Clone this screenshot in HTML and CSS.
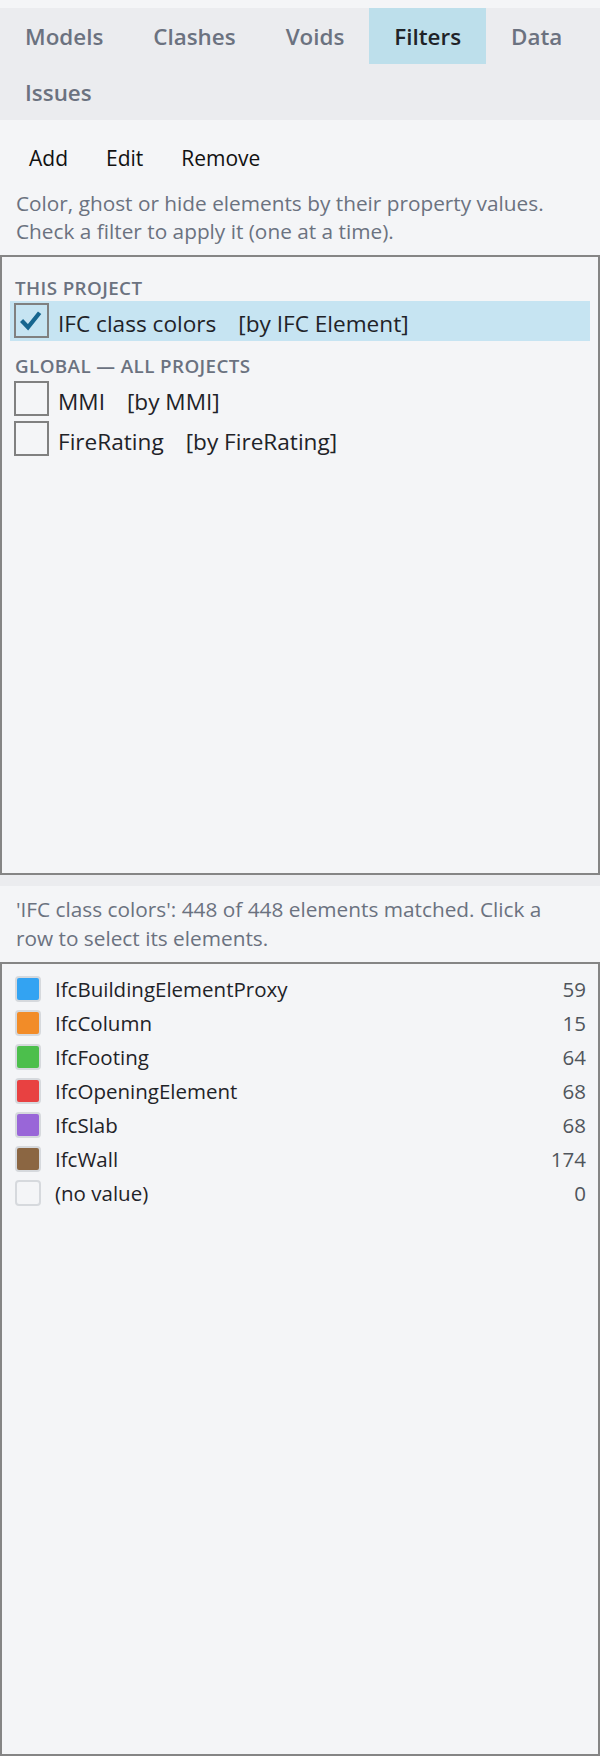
FILE: index.html
```html
<!DOCTYPE html>
<html lang="en">
<head>
<meta charset="utf-8">
<title>Filters</title>
<link rel="stylesheet" href="styles.css">
</head>
<body>
<div class="app">
  <nav class="tabs">
    <div class="tab">Models</div>
    <div class="tab">Clashes</div>
    <div class="tab">Voids</div>
    <div class="tab active">Filters</div>
    <div class="tab">Data</div>
    <div class="tab">Issues</div>
  </nav>

  <div class="toolbar">
    <button class="tool">Add</button>
    <button class="tool">Edit</button>
    <button class="tool">Remove</button>
  </div>

  <p class="hint">Color, ghost or hide elements by their property values. Check a filter to apply it (one at a time).</p>

  <div class="filter-list">
    <div class="group-head">THIS PROJECT</div>
    <div class="filter-row selected">
      <span class="check checked">
        <svg viewBox="0 0 24 24"><path d="M4.3 12 L9.3 17.2 L18.3 6" /></svg>
      </span>
      <span class="name">IFC class colors</span>
      <span class="by">[by IFC Element]</span>
    </div>
    <div class="group-head spaced">GLOBAL — ALL PROJECTS</div>
    <div class="filter-row">
      <span class="check"></span>
      <span class="name">MMI</span>
      <span class="by">[by MMI]</span>
    </div>
    <div class="filter-row">
      <span class="check"></span>
      <span class="name">FireRating</span>
      <span class="by">[by FireRating]</span>
    </div>
  </div>

  <div class="divider"></div>

  <p class="summary">'IFC class colors': 448 of 448 elements matched. Click a row to select its elements.</p>

  <div class="legend">
    <div class="legend-row"><span class="swatch" style="background:#33a3f2"></span><span class="label">IfcBuildingElementProxy</span><span class="count">59</span></div>
    <div class="legend-row"><span class="swatch" style="background:#f28c28"></span><span class="label">IfcColumn</span><span class="count">15</span></div>
    <div class="legend-row"><span class="swatch" style="background:#4cbf4c"></span><span class="label">IfcFooting</span><span class="count">64</span></div>
    <div class="legend-row"><span class="swatch" style="background:#e84141"></span><span class="label">IfcOpeningElement</span><span class="count">68</span></div>
    <div class="legend-row"><span class="swatch" style="background:#9966d8"></span><span class="label">IfcSlab</span><span class="count">68</span></div>
    <div class="legend-row"><span class="swatch" style="background:#8b6642"></span><span class="label">IfcWall</span><span class="count">174</span></div>
    <div class="legend-row"><span class="swatch empty"></span><span class="label">(no value)</span><span class="count">0</span></div>
  </div>
</div>
</body>
</html>
```

FILE: styles.css
```css
* {
  box-sizing: border-box;
}

html, body {
  margin: 0;
  padding: 0;
  background: #f4f5f7;
}

body {
  font-family: "Open Sans", "Noto Sans", "Liberation Sans", sans-serif;
  color: #1f2328;
}

.app {
  height: 1756px;
  display: flex;
  flex-direction: column;
  padding-top: 8px;
}

/* tab strip */
.tabs {
  display: flex;
  flex-wrap: wrap;
  background: #ebecef;
}

.tab {
  height: 56px;
  line-height: 54px;
  padding: 2px 25px 0;
  font-size: 22.4px;
  font-weight: 600;
  color: #6b7280;
}

.tab.active {
  background: #bddfeb;
  color: #1f2328;
}

/* action buttons */
.toolbar {
  display: flex;
  padding: 18px 10px 0;
}

.tool {
  font-family: inherit;
  font-size: 21px;
  line-height: 40px;
  height: 40px;
  padding: 0 19px;
  border: 0;
  background: transparent;
  color: #111;
}

.hint,
.summary {
  margin: 11px 0 0;
  padding: 0 30px 0 16px;
  font-size: 20.8px;
  line-height: 28.4px;
  color: #6b7280;
}

/* filter list */
.filter-list {
  margin-top: 9px;
  height: 620px;
  border: 2px solid #858585;
  padding: 16px 8px;
}

.group-head {
  font-size: 18.8px;
  font-weight: 600;
  letter-spacing: 0.4px;
  line-height: 22px;
  padding-top: 4px;
  color: #6b7280;
  padding-left: 5px;
  margin-bottom: 2px;
}

.group-head.spaced {
  margin-top: 10px;
}

.filter-row {
  display: flex;
  align-items: center;
  height: 40px;
  padding-left: 4px;
  font-size: 22.6px;
  color: #1f2328;
}

.filter-row.selected {
  background: #c6e4f2;
}

.name,
.by {
  padding-top: 6px;
}

.check {
  width: 35px;
  height: 35px;
  flex: none;
  border: 2px solid #808080;
  margin-right: 9px;
  display: flex;
}

.check svg {
  width: 100%;
  height: 100%;
  fill: none;
  stroke: #17668f;
  stroke-width: 3.3;
  stroke-linecap: butt;
  stroke-linejoin: miter;
}

.by {
  margin-left: 22px;
}

.divider {
  height: 11px;
  background: #ebecef;
}

.summary {
  margin-top: 9px;
  line-height: 29.6px;
}

/* legend */
.legend {
  margin-top: 8px;
  flex: 1;
  border: 2px solid #858585;
  padding: 8px 12px 0 13px;
}

.legend-row {
  display: flex;
  align-items: center;
  height: 34px;
  font-size: 20.5px;
}

.swatch {
  width: 26px;
  height: 26px;
  flex: none;
  border: 2px solid #d6d9dd;
  border-radius: 4px;
  margin-right: 14px;
}

.swatch.empty {
  background: #f4f5f7;
}

.label {
  flex: 1;
  color: #1f2328;
}

.count {
  color: #50555c;
}
```
